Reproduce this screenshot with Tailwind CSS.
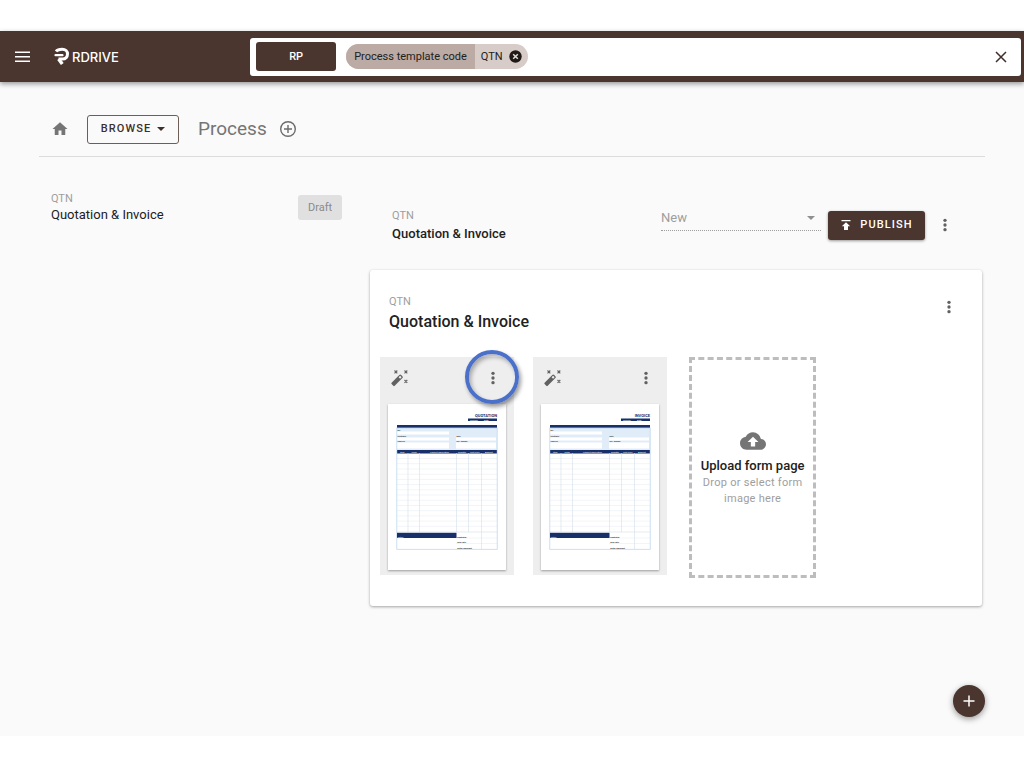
<!DOCTYPE html>
<html lang="en">
<head>
    <meta charset="UTF-8">
    <meta name="viewport" content="width=device-width, initial-scale=1.0">
    <title>RDrive - Process</title>
    <script src="https://cdn.jsdelivr.net/npm/@tailwindcss/browser@4"></script>
</head>
<body class="bg-white pt-[31px] pb-8 min-h-screen flex flex-col font-['Roboto',sans-serif] text-[#212121]">

    <!-- Shared drawings -->
    <svg class="hidden" aria-hidden="true">
        <symbol id="dots" viewBox="0 0 24 24">
            <circle cx="12" cy="5" r="2.5" /><circle cx="12" cy="12" r="2.5" /><circle cx="12" cy="19" r="2.5" />
        </symbol>
        <symbol id="wand" viewBox="0 0 20 20">
            <path fill-rule="evenodd" d="M1.600 15.700 9.300 8a1.300 1.300 0 0 1 1.900 0l1.200 1.200a1.300 1.300 0 0 1 0 1.900L4.700 18.800a1 1 0 0 1-1.400 0l-1.700-1.700a1 1 0 0 1 0-1.400ZM8.600 10.300l1.500 1.500 1.500-1.500-1.500-1.500Z" transform="translate(0 -1)" />
            <path d="m4.500 2.500 2.800 2.800m0-2.800-2.800 2.800M14.500 2.500l2.800 2.800m0-2.800-2.800 2.800M14.500 12l2.800 2.800m0-2.800L14.500 14.800" fill="none" stroke="currentColor" stroke-width="1.100" />
        </symbol>
        <symbol id="form" viewBox="0 0 118 166">
            <rect x="80" y="14.500" width="29" height="2.500" fill="#17306a" />
            <rect x="9" y="21" width="100" height="3" fill="#17306a" />
            <rect x="9" y="24" width="100" height="22" fill="#e0edf8" />
            <path d="M9 27.500h52v3H9zM9 33.500h52v3H9zM9 38.500h52v6H9zM68 33.500h40v3H68zM68 38.500h40v6H68z" fill="#fff" />
            <rect x="9" y="46" width="100" height="3.500" fill="#17306a" />
            <path d="M9 54.500h100M9 59.700h100M9 65h100M9 70.200h100M9 75.400h100M9 80.600h100M9 85.800h100M9 91h100M9 96.300h100M9 101.500h100M9 106.700h100M9 111.900h100M9 117.100h100M9 122.300h100M68 134h41M68 139.500h41" stroke="#e4eaf0" stroke-width=".5" />
            <path d="M20 49v79M31.500 49v79M68.500 49v79M80.500 49v79M93.500 49v96M9 128h100" stroke="#d3dfea" stroke-width=".6" />
            <rect x="8.800" y="24" width="100.400" height="121.300" fill="none" stroke="#bfd7ee" stroke-width=".8" />
            <rect x="9" y="128.800" width="59.500" height="5.200" fill="#17306a" />
            <g font-family="Roboto, sans-serif" font-weight="700" font-size="2" fill="#333">
                <text x="9.500" y="26.500">Bill</text>
                <text x="9.500" y="33">Customer</text>
                <text x="9.500" y="38.300">Address</text>
                <text x="68.500" y="33.300">Date</text>
                <text x="68.500" y="38.300">Ref. number</text>
                <text x="69" y="134" font-size="2.500">Subtotal</text>
                <text x="69" y="139.300" font-size="2.500">Tax rate</text>
                <text x="69" y="144.500" font-size="2.500">Total amount</text>
            </g>
            <g font-family="Roboto, sans-serif" font-size="2.200" fill="#fff">
                <text x="82" y="16.600">Number</text>
                <text x="96" y="16.600">Date</text>
                <text x="12" y="48.500">Item</text>
                <text x="23.500" y="48.500">Code</text>
                <text x="42" y="48.500">Product description</text>
                <text x="70" y="48.500">Quantity</text>
                <text x="82" y="48.500">Unit Price</text>
                <text x="97" y="48.500">Amount</text>
                <text x="9.500" y="133.500">Notes</text>
            </g>
        </symbol>
    </svg>

    <div class="relative flex-1 flex flex-col bg-[#fafafa]">

        <!-- Top bar -->
        <header class="flex items-center bg-[#4a352f] h-[51px] pr-[3px] shadow-[0_2px_5px_rgba(0,0,0,0.4)]">
            <div class="w-[24.500%] shrink-0 flex items-center">
                <button class="ml-3.5 w-[18px] text-white" aria-label="Menu">
                    <svg class="w-[18px] h-[18px]" viewBox="0 0 18 18" fill="currentColor"><path d="M1 3.500h15v1.600H1zM1 8h15v1.600H1zM1 12.500h15v1.600H1z" /></svg>
                </button>
                <a href="#" class="ml-[22px] flex items-center text-white">
                    <svg class="w-4 h-5" viewBox="0 0 16 20" fill="none" stroke="currentColor">
                        <path d="M2 4.400C3.200 2.900 5.400 2.300 8.200 2.300c3.300 0 5.300 2 5.300 4.800S11.600 12 8.600 12H4.500" stroke-width="3" />
                        <path d="M1.500 8.200h7" stroke-width="2.200" stroke-linecap="round" />
                        <path d="m4.600 12 3.700 5" stroke-width="3.400" />
                    </svg>
                    <span class="ml-0.5 font-['Inter',sans-serif] font-medium text-[13px] leading-5">RDRIVE</span>
                </a>
            </div>

            <form class="flex-1 min-w-0 h-[38px] bg-white rounded-[3px] flex items-center pl-1.5 pr-3">
                <button type="button" class="w-20 h-[29px] rounded-[3px] bg-[#4a352f] text-white text-[11px] leading-[29px] font-medium">RP</button>
                <div class="ml-2.5 h-[25px] flex rounded-full overflow-hidden text-[11px] leading-[25px] bg-[#d7ccc8]">
                    <span class="px-2 bg-[#bcaaa4] whitespace-nowrap">Process template code</span>
                    <span class="pl-1.5">QTN</span>
                    <button type="button" class="ml-1.5 mr-1.5" aria-label="Remove QTN">
                        <svg class="w-[13px] h-[13px]" viewBox="0 0 13 13"><circle cx="6.500" cy="6.500" r="6.200" fill="#1f1a18" /><path d="m4.200 4.200 4.600 4.600m0-4.600L4.200 8.800" stroke="#e5dcd9" stroke-width="1.500" /></svg>
                    </button>
                </div>
                <input type="text" aria-label="Search" class="flex-1 min-w-0 h-full outline-none">
                <button type="button" aria-label="Clear search">
                    <svg class="w-4 h-4" viewBox="0 0 16 16" stroke="#3e2f2a" stroke-width="1.500"><path d="m3 3 10 10m0-10L3 13" /></svg>
                </button>
            </form>
        </header>

        <main class="px-[39px]">
            <!-- Breadcrumb -->
            <nav class="h-[75px] pt-5 pl-3 flex items-center border-b border-[#dcdcdc]">
                <a href="#" aria-label="Home" class="text-[#757575]">
                    <svg class="w-[18px] h-[18px]" viewBox="0 0 24 24" fill="currentColor"><path d="M10 20v-6h4v6h5v-8h3L12 3 2 12h3v8z" /></svg>
                </a>
                <button class="ml-[18px] w-[92px] h-[29px] flex items-center justify-center border border-[#6f5d57] rounded-[3px] text-[#3e2f2a] text-[11px] font-medium tracking-widest">
                    BROWSE
                    <svg class="ml-1.5 w-2 h-1" viewBox="0 0 8 4" fill="currentColor"><path d="M0 0h8L4 4z" /></svg>
                </button>
                <h1 class="ml-[19px] text-[19px] leading-6 text-[#757575]">Process</h1>
                <button class="ml-3 text-[#6b6b6b]" aria-label="Add process">
                    <svg class="w-[18px] h-[18px]" viewBox="0 0 18 18" fill="none" stroke="currentColor" stroke-width="1.400"><circle cx="9" cy="9" r="7.300" /><path d="M9 5v8M5 9h8" /></svg>
                </button>
            </nav>

            <div class="flex">
                <!-- Process list -->
                <aside class="w-[35%] shrink-0 pt-[34px]">
                    <a href="#" class="flex items-center justify-between pl-3 pr-7">
                        <span class="leading-4">
                            <span class="block text-[11px] leading-4 text-[#9e9e9e]">QTN</span>
                            <span class="block text-[13px] leading-4">Quotation &amp; Invoice</span>
                        </span>
                        <span class="w-[44px] text-center rounded-[3px] bg-[#e0e0e0] text-[11px] leading-[25px] text-[#8a8a8a]">Draft</span>
                    </a>
                </aside>

                <section class="flex-1 min-w-0 pr-[3px]">
                    <div class="mt-12 h-10 pl-[22px] pr-6 flex items-center gap-[7px]">
                        <div class="flex-1">
                            <p class="text-[11px] leading-[18px] text-[#9e9e9e]">QTN</p>
                            <h2 class="text-[13px] leading-[18px] font-medium">Quotation &amp; Invoice</h2>
                        </div>
                        <div class="relative w-40 self-start">
                            <select aria-label="Version" disabled class="block appearance-none w-full h-[26px] text-[13px] text-[#9e9e9e] border-b border-dotted border-[#9e9e9e] opacity-100">
                                <option>New</option>
                            </select>
                            <svg class="absolute right-1.5 top-[11px] w-2 h-1" viewBox="0 0 8 4" fill="#8f8f8f"><path d="M0 0h8L4 4z" /></svg>
                        </div>
                        <button class="w-[97px] h-[29px] flex items-center justify-center rounded-[3px] bg-[#4a352f] text-white text-[11px] font-medium tracking-widest shadow-[0_1px_3px_rgba(0,0,0,0.4)]">
                            <svg class="mr-2 w-3 h-3" viewBox="0 0 12 12" fill="currentColor"><path d="M1.500 1h9v1.300h-9zM6 3.200l4.200 4.100H8v3.700H4V7.300H1.800z" /></svg>
                            PUBLISH
                        </button>
                        <button class="w-[26px] h-7 flex items-center justify-center text-[#616161]" aria-label="More options">
                            <svg class="w-4 h-4" fill="currentColor"><use href="#dots" /></svg>
                        </button>
                    </div>

                    <!-- Template card -->
                    <article class="mt-[25px] bg-white rounded-[3px] shadow-[0_1px_3px_rgba(0,0,0,0.35)] px-2.5 pt-[23px] pb-7">
                        <div class="flex justify-between pl-[9px] pr-2.5">
                            <div>
                                <p class="text-[11px] leading-[18px] text-[#9e9e9e]">QTN</p>
                                <h3 class="text-[16px] leading-[22px] font-medium">Quotation &amp; Invoice</h3>
                            </div>
                            <button class="w-[26px] h-7 flex items-center justify-center text-[#616161]" aria-label="Template options">
                                <svg class="w-4 h-4" fill="currentColor"><use href="#dots" /></svg>
                            </button>
                        </div>

                        <div class="mt-6 flex items-start gap-[19px]">
                            <div class="w-[134px] h-[218px] px-2 bg-[#eeeeee]">
                                <div class="h-[47px] pb-1.5 pl-0.5 flex items-center justify-between text-[#616161]">
                                    <button aria-label="Auto detect"><svg class="w-5 h-5" fill="currentColor"><use href="#wand" /></svg></button>
                                    <button class="relative w-[26px] h-7 flex items-center justify-center" aria-label="Page options">
                                        <svg class="w-4 h-4" fill="currentColor"><use href="#dots" /></svg>
                                        <span class="absolute -left-[15px] -top-[14px] w-[54px] h-[54px] rounded-full border-4 border-[#4a70c9] shadow-[2px_3px_4px_rgba(0,0,0,0.4),inset_2px_3px_4px_rgba(0,0,0,0.3)]"></span>
                                    </button>
                                </div>
                                <svg class="w-full h-[166px] bg-white shadow-[0_1px_2px_rgba(0,0,0,0.35)]" viewBox="0 0 118 166">
                                    <use href="#form" />
                                    <text x="109" y="13" text-anchor="end" font-size="4" font-weight="700" fill="#17306a">QUOTATION</text>
                                </svg>
                            </div>

                            <div class="w-[134px] h-[218px] px-2 bg-[#eeeeee]">
                                <div class="h-[47px] pb-1.5 pl-0.5 flex items-center justify-between text-[#616161]">
                                    <button aria-label="Auto detect"><svg class="w-5 h-5" fill="currentColor"><use href="#wand" /></svg></button>
                                    <button class="w-[26px] h-7 flex items-center justify-center" aria-label="Page options">
                                        <svg class="w-4 h-4" fill="currentColor"><use href="#dots" /></svg>
                                    </button>
                                </div>
                                <svg class="w-full h-[166px] bg-white shadow-[0_1px_2px_rgba(0,0,0,0.35)]" viewBox="0 0 118 166">
                                    <use href="#form" />
                                    <text x="109" y="13" text-anchor="end" font-size="4" font-weight="700" fill="#17306a">INVOICE</text>
                                </svg>
                            </div>

                            <label class="ml-[3px] w-[127px] h-[221px] flex flex-col items-center justify-center border-3 border-dashed border-[#bdbdbd] text-center cursor-pointer">
                                <svg class="w-[26px] h-[26px]" viewBox="0 0 24 24" fill="#757575"><path d="M19.350 10.040A7.490 7.490 0 0 0 12 4C9.110 4 6.600 5.640 5.350 8.040A5.994 5.994 0 0 0 0 14c0 3.310 2.690 6 6 6h13c2.760 0 5-2.240 5-5 0-2.640-2.050-4.780-4.650-4.960zM14 13v4h-4v-4H7l5-5 5 5h-3z" /></svg>
                                <span class="mt-[3px] text-[13px] leading-[18px] font-medium whitespace-nowrap">Upload form page</span>
                                <span class="w-[110px] text-[11px] leading-4 tracking-wide text-[#9e9e9e]">Drop or select form image here</span>
                                <input type="file" class="sr-only">
                            </label>
                        </div>
                    </article>
                </section>
            </div>
        </main>

        <button class="absolute right-[39px] bottom-[19px] w-8 h-8 rounded-full bg-[#4a352f] flex items-center justify-center shadow-[0_2px_6px_rgba(0,0,0,0.4)]" aria-label="Add">
            <svg class="w-3 h-3" viewBox="0 0 12 12" stroke="#fff" stroke-width="1.500"><path d="M6 .5v11M.5 6h11" /></svg>
        </button>
    </div>
</body>
</html>
